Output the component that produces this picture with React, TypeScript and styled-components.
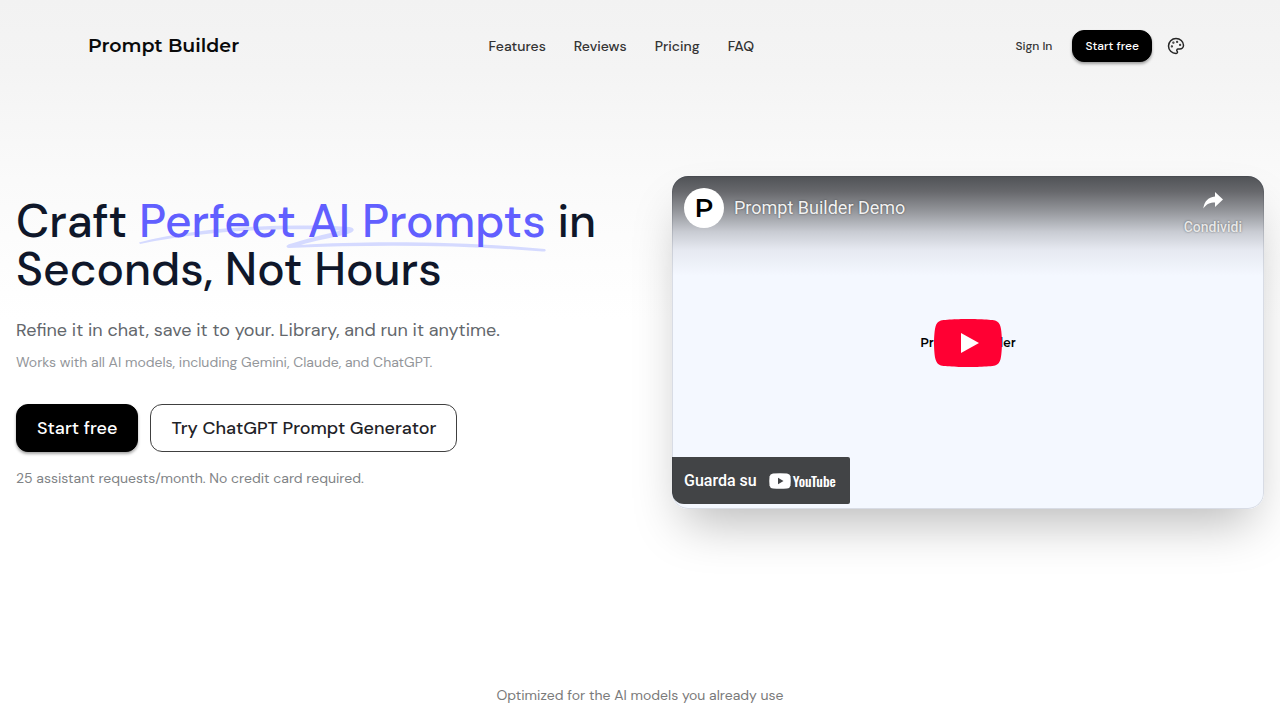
import React from "react";
import styled, { createGlobalStyle, css } from "styled-components";

const sans = `"DM Sans", Inter, "Open Sans", sans-serif`;
const display = `Montserrat, Inter, sans-serif`;
const player = `Roboto, "Liberation Sans", sans-serif`;

const GlobalStyle = createGlobalStyle`
  *, *::before, *::after { box-sizing: border-box; }
  body {
    margin: 0;
    background: #ffffff;
    color: #0f172a;
    font-family: ${sans};
    font-size: 14px;
    line-height: 20px;
  }
  h1, p { margin: 0; }
  a { color: inherit; text-decoration: none; }
  button { font-family: inherit; cursor: pointer; }
`;

const Page = styled.div`
  min-height: 100vh;
  overflow: hidden;
  background: linear-gradient(to bottom, #f2f2f2 0, #f4f4f4 70px, #fafafa 180px, #ffffff 320px);
`;

const Header = styled.header`
  max-width: 1152px;
  height: 92px;
  margin: 0 auto;
  padding: 0 24px;
  display: flex;
  align-items: center;
  justify-content: space-between;
`;

const Logo = styled.a`
  font-family: ${display};
  font-size: 19px;
  font-weight: 600;
  line-height: 28px;
  color: #0a0a0a;
`;

const Nav = styled.nav`
  display: flex;
  gap: 28px;
  color: #333333;
  font-weight: 500;
`;

const Actions = styled.div`
  display: flex;
  align-items: center;
  gap: 8px;
`;

const SignIn = styled.a`
  padding: 0 12px;
  font-size: 12px;
  font-weight: 500;
  color: #333333;
`;

const Button = styled.button<{ $size: "small" | "large"; $outline?: boolean }>`
  border: 1px solid #000000;
  background: #000000;
  color: #ffffff;
  font-weight: 500;
  box-shadow: 0 2px 3px rgba(0, 0, 0, 0.35);
  white-space: nowrap;
  ${({ $size }) =>
    $size === "small"
      ? css`
          height: 32px;
          padding: 0 12px;
          border-radius: 12px;
          font-size: 12px;
        `
      : css`
          height: 48px;
          padding: 0 20px;
          border-radius: 12px;
          font-size: 18px;
        `}
  ${({ $outline }) =>
    $outline &&
    css`
      border-color: #404040;
      background: #ffffff;
      color: #1f2328;
      box-shadow: none;
    `}
`;

const IconButton = styled.button`
  width: 32px;
  height: 32px;
  padding: 0;
  border: 0;
  background: none;
  color: #262626;
  display: grid;
  place-items: center;
`;

const Hero = styled.main`
  padding: 84px 16px 0;
  display: grid;
  grid-template-columns: repeat(2, minmax(0, 1fr));
  gap: 64px;
  align-items: center;
`;

const Title = styled.h1`
  font-size: 46px;
  font-weight: 500;
  line-height: 48px;
`;

const Highlight = styled.span`
  position: relative;
  display: inline-block;
  color: #615fff;
`;

const Swoosh = styled.svg`
  position: absolute;
  left: 0;
  top: 26px;
  width: 100%;
  height: 30px;
  overflow: visible;
`;

const HighlightText = styled.span`
  position: relative;
`;

const Lead = styled.p`
  margin-top: 23px;
  font-size: 18px;
  line-height: 28px;
  color: #63676c;
`;

const Note = styled.p<{ $strong?: boolean }>`
  margin-top: ${({ $strong }) => ($strong ? 16 : 8)}px;
  color: ${({ $strong }) => ($strong ? "#808386" : "#93969a")};
`;

const ButtonRow = styled.div`
  margin-top: 32px;
  display: flex;
  gap: 12px;
`;

const VideoFrame = styled.div`
  border-radius: 16px;
  box-shadow: 0 25px 50px -12px rgba(0, 0, 0, 0.28);
`;

const Video = styled.section`
  position: relative;
  aspect-ratio: 16 / 9;
  border-radius: 16px;
  overflow: hidden;
  background: #f4f8ff;
  font-family: ${player};
  display: flex;
  flex-direction: column;
  justify-content: space-between;
  &::after {
    content: "";
    position: absolute;
    inset: 0;
    border-radius: 16px;
    box-shadow: inset 0 0 0 1px rgba(15, 23, 42, 0.12);
    pointer-events: none;
  }
`;

const VideoTop = styled.div`
  height: 100px;
  padding: 12px 22px 0 12px;
  display: flex;
  align-items: flex-start;
  background: linear-gradient(
    to bottom,
    #505256 0,
    #68696d 16px,
    #96989d 36px,
    #c9ccd3 56px,
    #e6e9f1 74px,
    #f4f8ff 100px
  );
`;

const Avatar = styled.span`
  width: 40px;
  height: 40px;
  border-radius: 50%;
  background: #ffffff;
  color: #000000;
  display: grid;
  place-items: center;
  font-family: ${display};
  font-size: 26px;
  font-weight: 600;
  line-height: 40px;
`;

const VideoTitle = styled.a`
  margin-left: 10px;
  font-size: 18px;
  line-height: 40px;
  color: #f2f2f2;
  text-shadow: 0 0 2px rgba(0, 0, 0, 0.5);
`;

const Share = styled.button`
  margin-left: auto;
  padding: 4px 0 0;
  border: 0;
  background: none;
  display: flex;
  flex-direction: column;
  align-items: center;
  gap: 9px;
  color: #e8e8e8;
  font-size: 14px;
  font-weight: 500;
  line-height: 18px;
  text-shadow: 0 0 2px rgba(0, 0, 0, 0.5);
`;

const Poster = styled.span`
  position: absolute;
  inset: 0;
  display: grid;
  place-items: center;
  font-family: ${display};
  font-size: 12px;
  font-weight: 600;
  color: #000000;
`;

const Play = styled.button`
  position: absolute;
  left: 50%;
  top: 50%;
  width: 68px;
  height: 48px;
  margin: -24px 0 0 -34px;
  padding: 0;
  border: 0;
  background: none;
`;

const Watch = styled.a`
  align-self: flex-start;
  height: 47px;
  margin-bottom: 5px;
  padding: 0 14px 0 12px;
  border-radius: 0 2px 2px 12px;
  background: #424446;
  color: #ffffff;
  display: flex;
  align-items: center;
  gap: 12px;
  font-size: 16px;
  font-weight: 500;
`;

const Brand = styled.span`
  display: flex;
  align-items: center;
  gap: 2px;
  font-family: Oswald, "Roboto Condensed", "Liberation Sans Narrow", sans-serif;
  font-size: 14px;
  font-weight: 500;
`;

const Models = styled.footer`
  padding: 176px 16px 15px;
  text-align: center;
  color: #7a7a7a;
`;

const navItems = ["Features", "Reviews", "Pricing", "FAQ"];

export default function App() {
  return (
    <Page>
      <GlobalStyle />
      <Header>
        <Logo href="#">Prompt Builder</Logo>
        <Nav>
          {navItems.map((item) => (
            <a key={item} href={`#${item.toLowerCase()}`}>
              {item}
            </a>
          ))}
        </Nav>
        <Actions>
          <SignIn href="#signin">Sign In</SignIn>
          <Button $size="small">Start free</Button>
          <IconButton aria-label="Change theme">
            <svg width="18" height="18" viewBox="0 0 24 24" fill="none" stroke="currentColor" strokeWidth="2" strokeLinecap="round" strokeLinejoin="round">
              <path d="M12 22a1 1 0 0 1 0-20 10 9 0 0 1 10 9 5 5 0 0 1-5 5h-2.250a1.750 1.750 0 0 0-1.400 2.800l.3.400a1.750 1.750 0 0 1-1.400 2.800z" />
              <circle cx="13.500" cy="6.500" r=".5" fill="currentColor" />
              <circle cx="17.500" cy="10.500" r=".5" fill="currentColor" />
              <circle cx="6.500" cy="12.500" r=".5" fill="currentColor" />
              <circle cx="8.500" cy="7.500" r=".5" fill="currentColor" />
            </svg>
          </IconButton>
        </Actions>
      </Header>

      <Hero>
        <div>
          <Title>
            Craft{" "}
            <Highlight>
              <Swoosh viewBox="0 0 402 30" preserveAspectRatio="none" fill="#d5daff" aria-hidden="true">
                <path d="M0 19.500C58 4 140 0 208 4C214 5 214 9 206 11C190 15 172 18 160 22C230 17 330 19 401 26C403 27 402 29 399 28.500C320 22 240 21 148 25C145 25 145 22 149 21C165 16 184 11 199 7.500C140 4 62 8 1 21Z" />
              </Swoosh>
              <HighlightText>Perfect AI Prompts</HighlightText>
            </Highlight>{" "}
            in Seconds, Not Hours
          </Title>
          <Lead>Refine it in chat, save it to your. Library, and run it anytime.</Lead>
          <Note>Works with all AI models, including Gemini, Claude, and ChatGPT.</Note>
          <ButtonRow>
            <Button $size="large">Start free</Button>
            <Button $size="large" $outline>
              Try ChatGPT Prompt Generator
            </Button>
          </ButtonRow>
          <Note $strong>25 assistant requests/month. No credit card required.</Note>
        </div>

        <VideoFrame>
          <Video aria-label="Prompt Builder Demo">
            <VideoTop>
              <Avatar>P</Avatar>
              <VideoTitle href="#demo">Prompt Builder Demo</VideoTitle>
              <Share>
                <svg width="20" height="17" viewBox="0 0 20 17" aria-hidden="true">
                  <path fill="#ffffff" d="M12 0 20 7.500 12 15V10.500C7 10.500 3.500 12 .3 16.500C1.300 9.500 5 5.300 12 4.500Z" />
                </svg>
                Condividi
              </Share>
            </VideoTop>
            <Poster>Prompt Builder</Poster>
            <Play aria-label="Play">
              <svg width="68" height="48" viewBox="0 0 68 48">
                <path fill="#ff0033" d="M66.520 7.740c-.78-2.930-2.490-5.410-5.420-6.190C55.790.13 34 0 34 0S12.210.13 6.900 1.550c-2.930.78-4.630 3.260-5.420 6.190C.06 13.050 0 24 0 24s.06 10.950 1.480 16.260c.78 2.930 2.490 5.410 5.420 6.190C12.210 47.870 34 48 34 48s21.790-.13 27.100-1.550c2.930-.78 4.640-3.260 5.420-6.190C67.940 34.950 68 24 68 24s-.06-10.950-1.480-16.260z" />
                <path fill="#ffffff" d="M45 24 27 14v20" />
              </svg>
            </Play>
            <Watch href="#youtube">
              Guarda su
              <Brand>
                <svg width="22" height="16" viewBox="0 0 22 16" aria-hidden="true">
                  <path fill="#ffffff" d="M4 .5Q11 0 18 .5Q21 .8 21.500 3.500Q22 8 21.500 12.500Q21 15.200 18 15.500Q11 16 4 15.500Q1 15.200.5 12.500Q0 8 .5 3.500Q1 .8 4 .5Z" />
                  <path fill="#424446" d="M9 4.800 14.500 8 9 11.200Z" />
                </svg>
                YouTube
              </Brand>
            </Watch>
          </Video>
        </VideoFrame>
      </Hero>

      <Models>Optimized for the AI models you already use</Models>
    </Page>
  );
}
